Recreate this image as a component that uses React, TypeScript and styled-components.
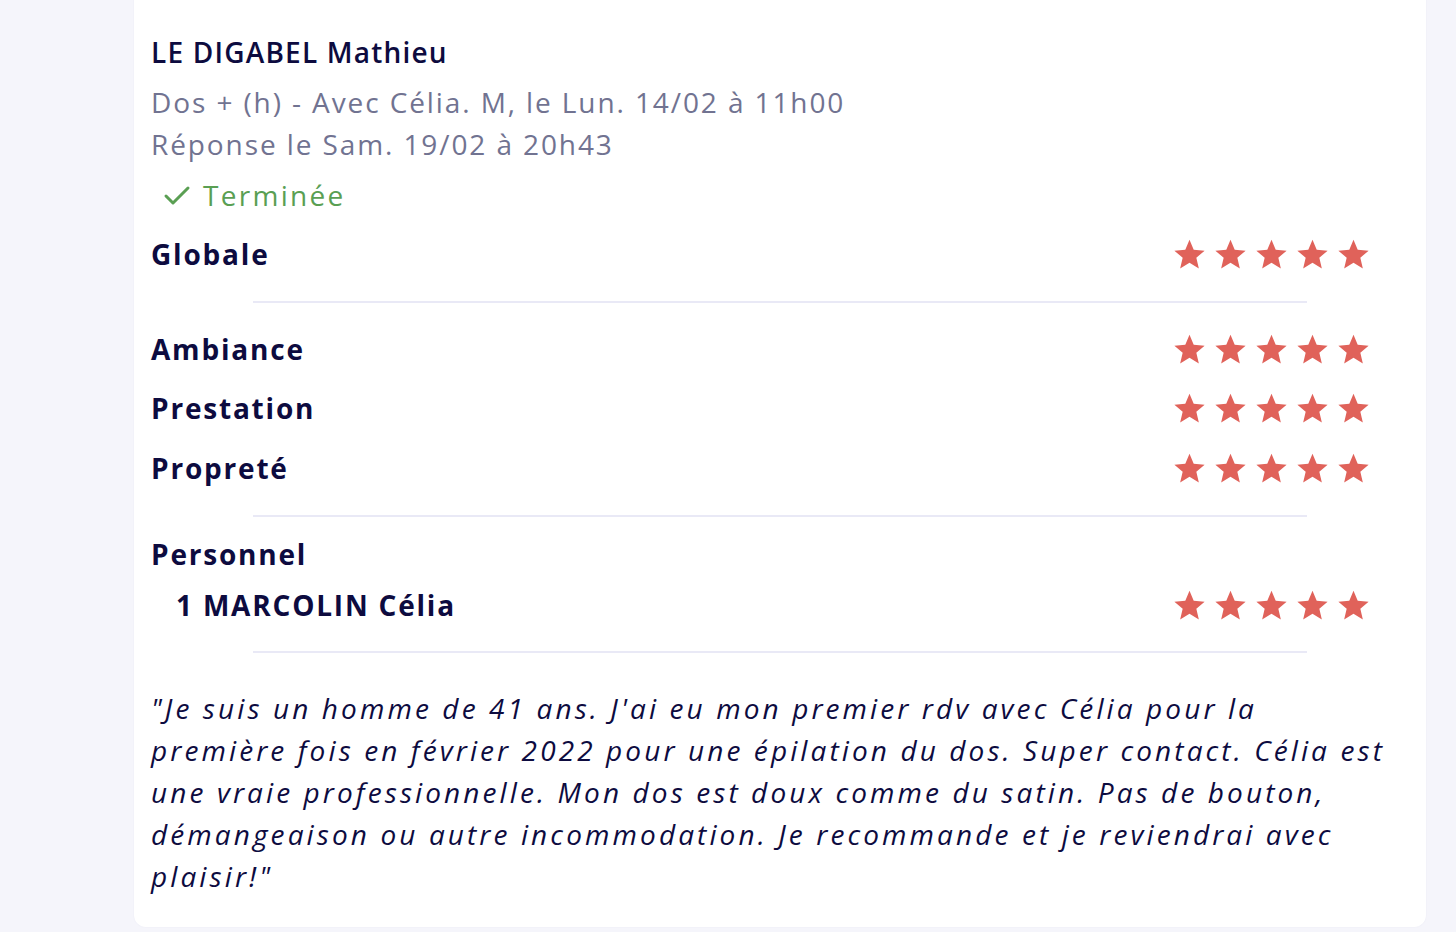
import React from "react";
import styled, { createGlobalStyle } from "styled-components";

const Global = createGlobalStyle`
  html, body { margin: 0; padding: 0; }
  body {
    background: #f5f5fb;
    font-family: "Open Sans", "Liberation Sans", sans-serif;
    -webkit-font-smoothing: antialiased;
  }
`;

const Page = styled.div`
  min-height: 932px;
  box-sizing: border-box;
  padding: 0 30px 7px 134px;
  overflow: hidden;
`;

const Card = styled.section`
  margin-top: -16px;
  background: #ffffff;
  border-radius: 12px;
  padding: 47px 17px 30px 17px;
  box-shadow: 0 0 2px rgba(40, 40, 110, 0.05);
`;

const Name = styled.h2`
  margin: 0;
  font-size: 28px;
  line-height: 42px;
  font-weight: 600;
  letter-spacing: 1.2px;
  color: #0d0b3f;
`;

const Meta = styled.p`
  margin: 8px 0 0;
  font-size: 28px;
  line-height: 42px;
  font-weight: 400;
  letter-spacing: 1.9px;
  color: #717391;
`;

const Status = styled.div`
  margin: 9px 0 0 12px;
  display: flex;
  align-items: center;
  gap: 12px;
  font-size: 28px;
  line-height: 42px;
  letter-spacing: 2.3px;
  color: #5a9f53;
`;

const Row = styled.div<{ $top: number }>`
  margin-top: ${(p) => p.$top}px;
  display: flex;
  align-items: center;
  justify-content: space-between;
  padding-right: 40px;
  height: 42px;
`;

const Label = styled.span<{ $indent?: boolean }>`
  font-size: 28px;
  font-weight: 700;
  letter-spacing: 1.8px;
  color: #0d0b3f;
  padding-left: ${(p) => (p.$indent ? 25 : 0)}px;
`;

const Stars = styled.div`
  display: flex;
  gap: 10px;
`;

const Divider = styled.hr<{ $top: number }>`
  width: 1054px;
  height: 2px;
  border: 0;
  background: #e9e9f6;
  margin: ${(p) => p.$top}px auto 0;
`;

const Quote = styled.p`
  margin: 34px 0 0;
  font-size: 28px;
  line-height: 42px;
  font-style: italic;
  font-weight: 500;
  letter-spacing: 3.1px;
  color: #0d0b3f;
  max-width: 1246px;
`;

const Star = () => (
  <svg width="31" height="30" viewBox="0 0 24 23.4" aria-hidden="true">
    <polygon
      fill="#e0625a"
      points="12,0.5 15.29,8.37 23.79,9.07 17.33,14.63 19.29,22.93 12,18.5 4.71,22.93 6.67,14.63 0.21,9.07 8.71,8.37"
    />
  </svg>
);

const FiveStars = () => (
  <Stars>
    {[0, 1, 2, 3, 4].map((i) => (
      <Star key={i} />
    ))}
  </Stars>
);

const Check = () => (
  <svg width="28" height="22" viewBox="0 0 28 22" aria-hidden="true">
    <path d="M3 12 L10 19 L25 4" fill="none" stroke="#5a9f53" strokeWidth="3" strokeLinecap="round" strokeLinejoin="round" />
  </svg>
);

export default function App() {
  return (
    <Page>
      <Global />
      <Card>
        <Name>LE DIGABEL Mathieu</Name>
        <Meta>
          Dos + (h) - Avec Célia. M, le Lun. 14/02 à 11h00
          <br />
          Réponse le Sam. 19/02 à 20h43
        </Meta>
        <Status>
          <Check />
          Terminée
        </Status>
        <Row $top={17}>
          <Label>Globale</Label>
          <FiveStars />
        </Row>
        <Divider $top={26} />
        <Row $top={25}>
          <Label>Ambiance</Label>
          <FiveStars />
        </Row>
        <Row $top={17}>
          <Label>Prestation</Label>
          <FiveStars />
        </Row>
        <Row $top={18}>
          <Label>Propreté</Label>
          <FiveStars />
        </Row>
        <Divider $top={26} />
        <Row $top={16}>
          <Label>Personnel</Label>
        </Row>
        <Row $top={9}>
          <Label $indent>1 MARCOLIN Célia</Label>
          <FiveStars />
        </Row>
        <Divider $top={25} />
        <Quote>
          "Je suis un homme de 41 ans. J'ai eu mon premier rdv avec Célia pour la première fois en février 2022 pour une épilation du dos. Super contact. Célia est une vraie professionnelle. Mon dos est doux comme du satin. Pas de bouton, démangeaison ou autre incommodation. Je recommande et je reviendrai avec plaisir!"
        </Quote>
      </Card>
    </Page>
  );
}
